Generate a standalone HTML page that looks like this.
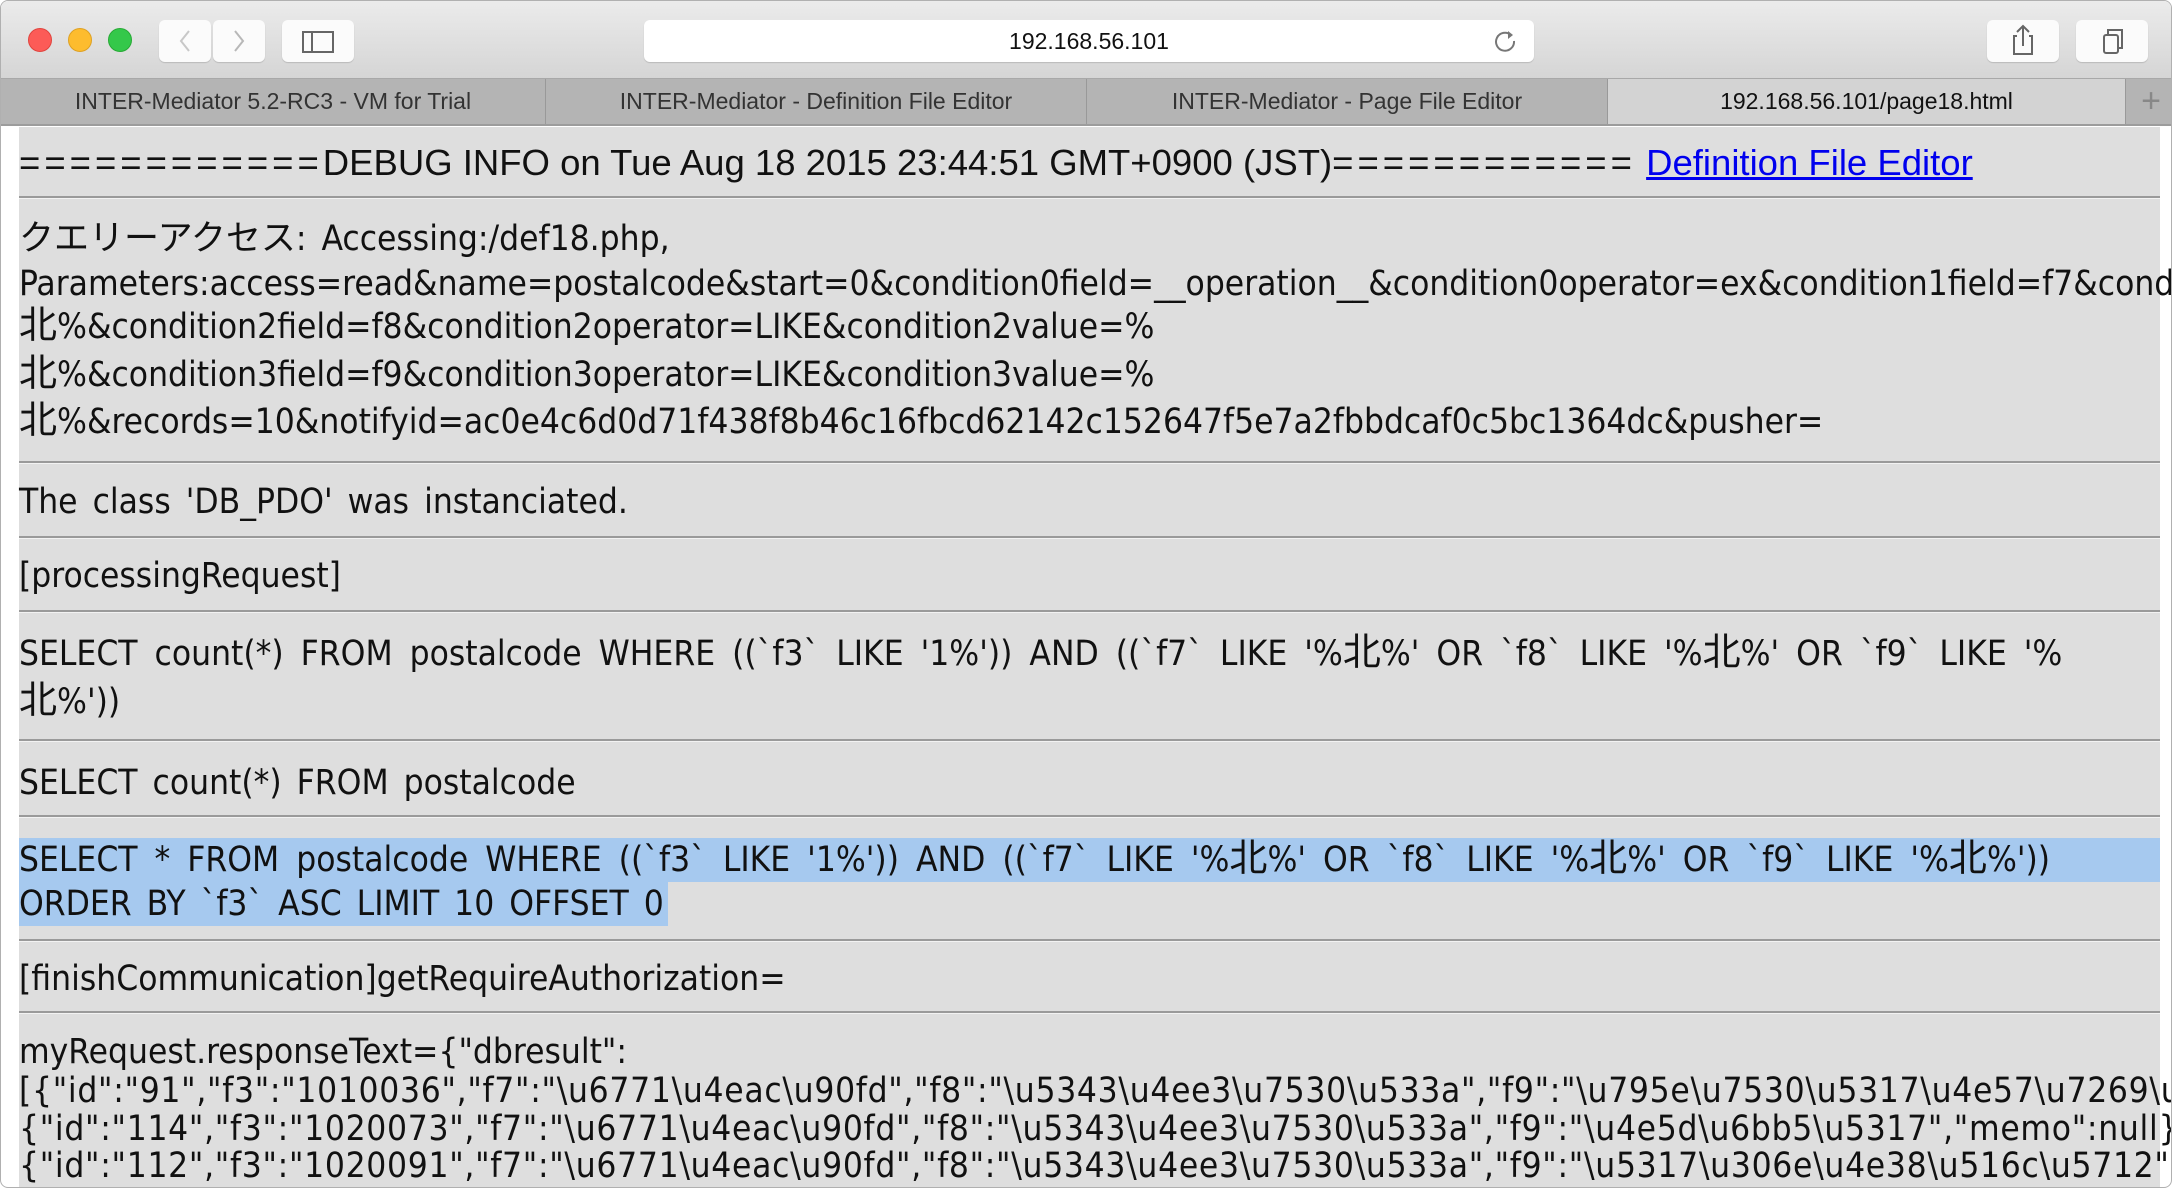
<!DOCTYPE html>
<html><head><meta charset="utf-8"><style>
*{margin:0;padding:0;box-sizing:border-box}
html,body{width:2178px;height:1188px;overflow:hidden;background:#fff}
.win{position:absolute;left:0;top:0;width:2172px;height:1188px;border:1px solid #b0b0b0;border-radius:8px;overflow:hidden;background:#fff}
.tb{position:absolute;left:0;top:0;width:100%;height:78px;background:linear-gradient(#ebebeb,#d5d5d5);border-bottom:1px solid #a8a8a8}
.dot{position:absolute;top:27px;width:24px;height:24px;border-radius:50%}
.btn{position:absolute;top:19px;height:42px;background:#fbfbfb;border-radius:6px;box-shadow:0 1px 1px rgba(0,0,0,.15)}
.url{position:absolute;left:643px;top:19px;width:890px;height:42px;background:#fff;border-radius:6px;box-shadow:0 1px 1px rgba(0,0,0,.15);font:23px "Liberation Sans",sans-serif;text-align:center;line-height:42px;color:#111}
.tabs{position:absolute;left:0;top:78px;width:100%;height:47px;background:#b4b4b4;border-bottom:2px solid #9c9c9c}
.tab{position:absolute;top:0;height:45px;font:23px "Liberation Sans",sans-serif;color:#333;text-align:center;line-height:45px;border-right:1px solid #999}
.content{position:absolute;left:18px;top:126px;width:2141px;height:1062px;background:#dedede}
.ln{position:absolute;left:18px;white-space:nowrap;font:35px "DejaVu Sans Condensed","DejaVu Sans","Noto Sans CJK JP",sans-serif;letter-spacing:0;word-spacing:5px;color:#111;line-height:46px;height:46px}
.s{word-spacing:7px}
.j{letter-spacing:0.7px}
.hr{position:absolute;left:18px;width:2141px;height:3px;border-top:2px solid #9a9a9a;border-bottom:1px solid #f2f2f2}
.hl{position:absolute;background:#a6c9ef}
.eq{letter-spacing:4px}
.k{font-size:38px}
</style></head><body>
<div class="win">
<div class="tb">
<div class="dot" style="left:27px;background:#fc5b57;border:1px solid #e0443e"></div>
<div class="dot" style="left:67px;background:#fdbc2e;border:1px solid #dea123"></div>
<div class="dot" style="left:107px;background:#34c84a;border:1px solid #27aa35"></div>
<div class="btn" style="left:158px;width:52px"><svg width="52" height="42"><path d="M30 11 L22 21 L30 31" stroke="#c8c8c8" stroke-width="2" fill="none"/></svg></div>
<div class="btn" style="left:212px;width:52px"><svg width="52" height="42"><path d="M22 11 L30 21 L22 31" stroke="#b8b8b8" stroke-width="2" fill="none"/></svg></div>
<div class="btn" style="left:281px;width:72px"><svg width="72" height="42"><rect x="21" y="12" width="30" height="20" fill="none" stroke="#666" stroke-width="2"/><line x1="30" y1="12" x2="30" y2="32" stroke="#666" stroke-width="2"/></svg></div>
<div class="url">192.168.56.101<svg style="position:absolute;right:14px;top:9px" width="26" height="26"><path d="M17 6 A9 9 0 1 0 20 12" stroke="#777" stroke-width="2" fill="none"/><path d="M14 2 L19 6 L14 10" fill="#777"/></svg></div>
<div class="btn" style="left:1986px;width:72px"><svg width="72" height="42"><path d="M30 16 H27 V34 H45 V16 H42" stroke="#666" stroke-width="2" fill="none"/><path d="M36 26 V6 M30 12 L36 6 L42 12" stroke="#666" stroke-width="2" fill="none"/></svg></div>
<div class="btn" style="left:2075px;width:72px"><svg width="72" height="42"><rect x="28" y="15" width="14" height="18" rx="2" fill="none" stroke="#666" stroke-width="2"/><path d="M32 15 V10 H46 V28 H42" stroke="#666" stroke-width="2" fill="none"/></svg></div>
</div>
<div class="tabs">
<div class="tab" style="left:0;width:545px">INTER-Mediator 5.2-RC3 - VM for Trial</div>
<div class="tab" style="left:545px;width:541px">INTER-Mediator - Definition File Editor</div>
<div class="tab" style="left:1086px;width:521px">INTER-Mediator - Page File Editor</div>
<div class="tab" style="left:1607px;width:518px;background:#d3d3d3;color:#111">192.168.56.101/page18.html</div>
<div class="tab" style="left:2125px;width:50px;border:none;color:#888;font-size:34px">+</div>
</div>
<div class="content"></div>
<div class="hl" style="left:18px;top:837px;width:2141px;height:44px"></div>
<div class="hl" style="left:18px;top:880px;width:649px;height:45px"></div>

<div class="ln" style="top:139px;font-family:'Liberation Sans',sans-serif;font-size:36.5px;letter-spacing:0;word-spacing:0"><span class="eq">============</span>DEBUG INFO on Tue Aug 18 2015 23:44:51 GMT+0900 (JST)<span class="eq">============</span> <span style="color:#0000ee;text-decoration:underline">Definition File Editor</span></div>
<div class="hr" style="top:195px"></div>
<div class="ln" style="top:215px">クエリーアクセス: Accessing:/def18.php,</div>
<div class="ln" style="top:260px">Parameters:access=read&amp;name=postalcode&amp;start=0&amp;condition0field=__operation__&amp;condition0operator=ex&amp;condition1field=f7&amp;condition1operator=LIKE</div>
<div class="ln" style="top:301px"><span class="k">北</span>%&amp;condition2field=f8&amp;condition2operator=LIKE&amp;condition2value=%</div>
<div class="ln" style="top:349px"><span class="k">北</span>%&amp;condition3field=f9&amp;condition3operator=LIKE&amp;condition3value=%</div>
<div class="ln" style="top:396px"><span class="k">北</span>%&amp;records=10&amp;notifyid=ac0e4c6d0d71f438f8b46c16fbcd62142c152647f5e7a2fbbdcaf0c5bc1364dc&amp;pusher=</div>
<div class="hr" style="top:460px"></div>
<div class="ln" style="top:478px">The class 'DB_PDO' was instanciated.</div>
<div class="hr" style="top:535px"></div>
<div class="ln" style="top:552px">[processingRequest]</div>
<div class="hr" style="top:609px"></div>
<div class="ln s" style="top:628px">SELECT count(*) FROM postalcode WHERE ((`f3` LIKE '1%')) AND ((`f7` LIKE '%<span class="k">北</span>%' OR `f8` LIKE '%<span class="k">北</span>%' OR `f9` LIKE '%</div>
<div class="ln" style="top:676px"><span class="k">北</span>%'))</div>
<div class="hr" style="top:738px"></div>
<div class="ln" style="top:759px">SELECT count(*) FROM postalcode</div>
<div class="hr" style="top:814px"></div>
<div class="ln s" style="top:834px">SELECT * FROM postalcode WHERE ((`f3` LIKE '1%')) AND ((`f7` LIKE '%<span class="k">北</span>%' OR `f8` LIKE '%<span class="k">北</span>%' OR `f9` LIKE '%<span class="k">北</span>%'))</div>
<div class="ln" style="top:880px">ORDER BY `f3` ASC LIMIT 10 OFFSET 0</div>
<div class="hr" style="top:938px"></div>
<div class="ln" style="top:955px">[finishCommunication]getRequireAuthorization=</div>
<div class="hr" style="top:1010px"></div>
<div class="ln" style="top:1028px">myRequest.responseText={"dbresult":</div>
<div class="ln j" style="top:1067px">[{"id":"91","f3":"1010036","f7":"\u6771\u4eac\u90fd","f8":"\u5343\u4ee3\u7530\u533a","f9":"\u795e\u7530\u5317\u4e57\u7269\u753a"</div>
<div class="ln j" style="top:1105px">{"id":"114","f3":"1020073","f7":"\u6771\u4eac\u90fd","f8":"\u5343\u4ee3\u7530\u533a","f9":"\u4e5d\u6bb5\u5317","memo":null},</div>
<div class="ln j" style="top:1142px">{"id":"112","f3":"1020091","f7":"\u6771\u4eac\u90fd","f8":"\u5343\u4ee3\u7530\u533a","f9":"\u5317\u306e\u4e38\u516c\u5712","memo"</div>
</div>
</body></html>
